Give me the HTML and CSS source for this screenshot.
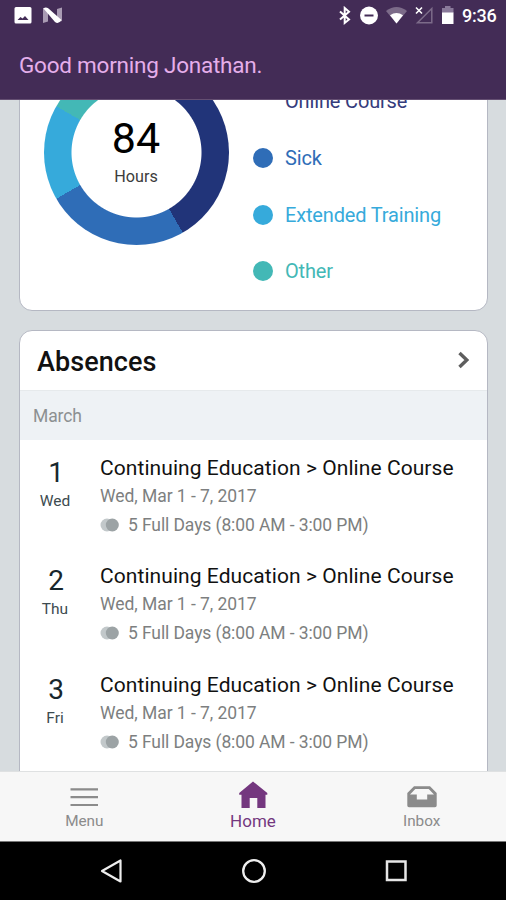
FILE: index.html
```html
<!DOCTYPE html>
<html lang="en">
<head>
<meta charset="utf-8">
<title>Home</title>
<link rel="stylesheet" href="styles.css">
</head>
<body>
<div class="screen">
  <header class="header">
    <div class="status">
      <svg class="status-left" width="50" height="18" viewBox="0 0 50 18">
        <path fill="#fff" fill-rule="evenodd" d="M2 0H16Q17.500 0 17.500 1.500V15Q17.500 16.500 16 16.500H2Q.500 16.500 .500 15V1.500Q.500 0 2 0ZM3.500 13H14.500L11 9L8.500 11.500L6.500 10Z"/>
        <path fill="#a99bb3" d="M29 1H34V14.500L29 16ZM43 2L48 .500V14L43 15.500Z"/>
        <path fill="#fff" d="M29.500 1.500Q31.500-.500 34.500 1.500L47.500 13Q44.500 17.500 41 15Z"/>
      </svg>
      <div class="status-right">
        <svg width="137" height="20" viewBox="0 0 137 20">
          <path fill="none" stroke="#fff" stroke-width="2" d="M1 5.500L10 13.500L5.700 17V2L10 5.800L1 13.500"/>
          <circle cx="30" cy="9.500" r="9" fill="#fff"/><path stroke="#432c56" stroke-width="2" d="M25.500 9.500H34.500"/>
          <path fill="#7c6b89" d="M47 5Q57.500-3 68 5L57.500 17.500Z"/><path fill="#fff" d="M51 9.300Q57.500 4.500 64 9.300L57.500 17.500Z"/>
          <path fill="none" stroke="#7c6b89" stroke-width="1.500" d="M92.800 2.500V16.700H78.500Z"/>
          <path stroke="#fff" stroke-width="1.600" d="M77 1.500L83 7.500M83 1.500L77 7.500"/>
          <path fill="#89799a" d="M106 0H111.500V2H114.500V7H103V2H106Z"/><path fill="#fff" d="M103 6.500H114.500V18H103Z"/>
        </svg>
        <span class="clock">9:36</span>
      </div>
    </div>
    <div class="greeting"><span>Good morning Jonathan.</span></div>
  </header>

  <main class="feed">
    <section class="card balance">
      <div class="donut">
        <div class="donut-label"><span class="amount">84</span><span class="unit">Hours</span></div>
      </div>
      <ul class="legend">
        <li class="navy"><span>Online Course</span></li>
        <li class="blue"><i></i><span>Sick</span></li>
        <li class="sky"><i></i><span>Extended Training</span></li>
        <li class="teal"><i></i><span>Other</span></li>
      </ul>
    </section>

    <section class="card absences">
      <div class="card-head">
        <h2>Absences</h2>
        <svg width="12" height="18" viewBox="0 0 12 18"><path fill="none" stroke="#5e5e5e" stroke-width="3.400" d="M1.500 2L8.800 9L1.500 16"/></svg>
      </div>
      <div class="month"><span>March</span></div>
      <article class="row">
        <div class="day"><b>1</b><span>Wed</span></div>
        <div class="info"><h3>Continuing Education &gt; Online Course</h3><p class="dates">Wed, Mar 1 - 7, 2017</p>
          <p class="hours"><svg width="20" height="14" viewBox="0 0 20 14"><circle cx="7" cy="7" r="6.500" fill="#c2c8ca"/><circle cx="12.300" cy="7" r="6.500" fill="#9ca3a5"/></svg><span>5 Full Days (8:00 AM - 3:00 PM)</span></p></div>
      </article>
      <article class="row">
        <div class="day"><b>2</b><span>Thu</span></div>
        <div class="info"><h3>Continuing Education &gt; Online Course</h3><p class="dates">Wed, Mar 1 - 7, 2017</p>
          <p class="hours"><svg width="20" height="14" viewBox="0 0 20 14"><circle cx="7" cy="7" r="6.500" fill="#c2c8ca"/><circle cx="12.300" cy="7" r="6.500" fill="#9ca3a5"/></svg><span>5 Full Days (8:00 AM - 3:00 PM)</span></p></div>
      </article>
      <article class="row">
        <div class="day"><b>3</b><span>Fri</span></div>
        <div class="info"><h3>Continuing Education &gt; Online Course</h3><p class="dates">Wed, Mar 1 - 7, 2017</p>
          <p class="hours"><svg width="20" height="14" viewBox="0 0 20 14"><circle cx="7" cy="7" r="6.500" fill="#c2c8ca"/><circle cx="12.300" cy="7" r="6.500" fill="#9ca3a5"/></svg><span>5 Full Days (8:00 AM - 3:00 PM)</span></p></div>
      </article>
    </section>
  </main>

  <nav class="tabs">
    <div class="tab">
      <svg width="30" height="30" viewBox="0 0 30 30"><path stroke="#8b8b8b" stroke-width="2.200" d="M1.500 8.300H29M1.500 16.200H29M1.500 24H29"/></svg>
      <span>Menu</span>
    </div>
    <div class="tab active">
      <svg width="30" height="30" viewBox="0 0 30 30"><path fill="#74377f" d="M15 .500L29.300 12V13.800H27.500V27H19.300V17H11.700V27H3.500V13.800H1.200V12Z"/></svg>
      <span>Home</span>
    </div>
    <div class="tab">
      <svg width="30" height="30" viewBox="0 0 30 30"><path fill="#8b8b8b" fill-rule="evenodd" d="M7 5.300H23L29.700 12V24.500Q29.700 26.300 28 26.300H2Q.300 26.300 .300 24.500V12ZM8.300 8L3 13.500H9.800V18.500H20.200V13.500H27L21.700 8Z"/></svg>
      <span>Inbox</span>
    </div>
  </nav>

  <footer class="system">
    <svg width="24" height="26" viewBox="0 0 24 26"><path fill="none" stroke="#eee" stroke-width="2.200" stroke-linejoin="round" d="M20.500 2.500V23.500L2 13Z"/></svg>
    <svg width="26" height="26" viewBox="0 0 26 26"><circle cx="13" cy="13" r="10.800" fill="none" stroke="#eee" stroke-width="2.300"/></svg>
    <svg width="24" height="26" viewBox="0 0 24 26"><rect x="3" y="3.500" width="18.500" height="18.500" fill="none" stroke="#e6e6e6" stroke-width="2.500"/></svg>
  </footer>
</div>
</body>
</html>
```
FILE: styles.css
```css
* { box-sizing: border-box; margin: 0; padding: 0; }
body { font-family: Roboto, "Liberation Sans", sans-serif; background: #000; }
.screen { width: 506px; height: 900px; display: flex; flex-direction: column; overflow: hidden; white-space: nowrap; }
svg { display: block; flex: none; }

.header { height: 100px; flex: none; background: #432c56; border-bottom: 1px solid #644f72; }
.status { height: 32px; display: flex; justify-content: space-between; padding: 6px 9px 0 14px; }
.status-left { margin-top: 1px; }
.status-right { display: flex; }
.clock { width: 35px; margin-left: -14px; font-size: 18px; font-weight: 500; letter-spacing: -0.2px; line-height: 20px; color: #fff; }
.greeting { height: 67px; padding-left: 19px; font-size: 22.500px; letter-spacing: -0.230px; line-height: 67px; color: #e5aeea; }

.feed { height: 671px; flex: none; overflow: hidden; background: #d7dcdf; padding: 0 18px 0 19px; display: flex; flex-direction: column; gap: 19px; }
.card { flex: none; background: #fff; border: 1px solid #b5b8c3; border-radius: 13px; overflow: hidden; }
.balance { height: 261px; margin-top: -50px; display: flex; padding: 9px 0 0 23.500px; }
.donut { flex: none; width: 185px; height: 185px; border-radius: 50%; background: radial-gradient(circle, #fff 64.500px, transparent 65.500px), conic-gradient(#213479 150deg, #2f6db7 150deg 240deg, #36aadb 240deg 300deg, #43b8b6 300deg); }
.donut-label { height: 100%; display: flex; flex-direction: column; align-items: center; padding-top: 53px; }
.amount { font-size: 43px; line-height: 50px; color: #000; }
.unit { font-size: 16.200px; line-height: 22px; margin-top: 3px; color: #3c3c3c; }
.legend { list-style: none; margin: 13px 0 0 24.500px; font-size: 20px; letter-spacing: -0.160px; }
.legend li { height: 56.700px; display: flex; align-items: center; }
.legend i { width: 20px; height: 20px; border-radius: 50%; background: currentColor; margin-right: 12px; }
.legend .navy { color: #353c7c; padding-left: 32px; }
.legend .blue { color: #2f6db7; }
.legend .sky { color: #36aadb; }
.legend .teal { color: #43b8b6; }

.absences { height: 500px; }
.card-head { height: 59px; display: flex; align-items: center; justify-content: space-between; padding: 0 17px; }
.card-head h2 { font-size: 27px; font-weight: 500; line-height: 34px; letter-spacing: 0.060px; padding-top: 2px; color: #111; }
.card-head svg { margin-top: -2px; }
.month { height: 50px; padding-left: 13px; background: #eef2f5; border-top: 1px solid #e6eaec; font-size: 17.500px; letter-spacing: -0.100px; line-height: 51px; color: #8c9091; }
.row { height: 108.300px; display: flex; }
.day { width: 80px; padding: 15px 10px 0 0; display: flex; flex-direction: column; align-items: center; color: #3d4b50; }
.day b { font-size: 28px; font-weight: 400; line-height: 36px; color: #18272d; padding-left: 2px; }
.day span { font-size: 15.500px; line-height: 20px; }
.info { padding-top: 14px; }
.info h3 { font-size: 21px; font-weight: 400; line-height: 28px; letter-spacing: 0.070px; color: #111; }
.info p { font-size: 17.500px; line-height: 28px; color: #7d7f80; }
.info .dates { letter-spacing: -0.050px; }
.info .hours { display: flex; align-items: center; gap: 8px; line-height: 30px; letter-spacing: -0.100px; }

.tabs { height: 71px; flex: none; background: #f7f7f7; border-top: 1px solid #dfe1e2; border-bottom: 1px solid #777; display: grid; grid-template-columns: repeat(3, 1fr); }
.tab { display: flex; flex-direction: column; align-items: center; padding-top: 9px; font-size: 15.300px; line-height: 21px; color: #8b8b8b; }
.tab.active { color: #74377f; font-size: 17px; line-height: 20px; }

.system { flex: 1; background: #000; display: flex; justify-content: center; gap: 117px; padding: 16px 0 0 1px; }
```
